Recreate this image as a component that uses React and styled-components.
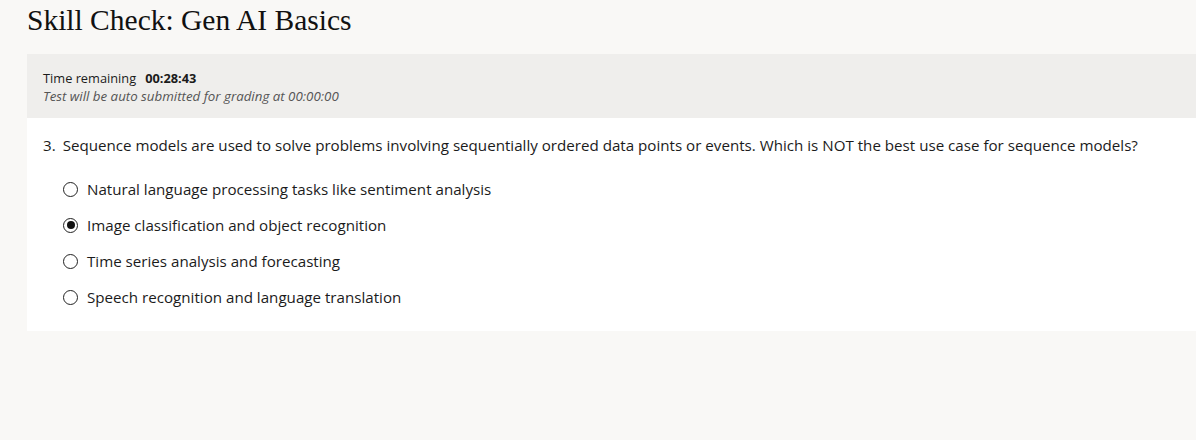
import React from "react";
import styled, { createGlobalStyle } from "styled-components";

const Global = createGlobalStyle`
  html, body { margin: 0; padding: 0; background: #f9f8f6; }
  body { font-family: "Open Sans", "Noto Sans", sans-serif; color: #1b1b1b; }
`;

const Page = styled.div`
  padding: 0 0 0 27px;
  min-height: 440px;
  box-sizing: border-box;
`;

const Title = styled.h1`
  margin: 0;
  padding-top: 4px;
  height: 54px;
  box-sizing: border-box;
  font-family: "Liberation Serif", "Times New Roman", serif;
  font-weight: 400;
  font-size: 29.5px;
  line-height: 32px;
  color: #111;
`;

const Card = styled.section`
  background: #fff;
  display: flex;
  flex-direction: column;
`;

const TimerBar = styled.div`
  background: #efeeec;
  height: 64px;
  padding: 15px 0 0 16px;
  box-sizing: border-box;
  font-size: 12.8px;
  line-height: 18px;
`;

const TimeLine = styled.div`
  display: flex;
  gap: 9px;
`;

const Strong = styled.span`
  font-weight: 700;
`;

const Note = styled.div`
  font-style: italic;
  font-size: 13.3px;
  color: #555;
`;

const Body = styled.div`
  padding: 17px 0 24px 16px;
`;

const Question = styled.p`
  margin: 0 0 24px;
  font-size: 15.15px;
  line-height: 20px;
  display: flex;
  gap: 7px;
`;

const Options = styled.div`
  display: flex;
  flex-direction: column;
  padding-left: 20px;
  gap: 16px;
`;

const Option = styled.label`
  display: flex;
  align-items: center;
  gap: 9px;
  font-size: 15.15px;
  line-height: 20px;
`;

const Radio = styled.span`
  width: 15px;
  height: 15px;
  box-sizing: border-box;
  border-radius: 50%;
  border: 1.5px solid #222;
  display: flex;
  align-items: center;
  justify-content: center;
  &::after {
    content: "";
    width: 8px;
    height: 8px;
    border-radius: 50%;
    background: ${(p) => (p.$checked ? "#111" : "transparent")};
  }
`;

const options = [
  "Natural language processing tasks like sentiment analysis",
  "Image classification and object recognition",
  "Time series analysis and forecasting",
  "Speech recognition and language translation",
];

export default function App() {
  return (
    <>
      <Global />
      <Page>
        <Title>Skill Check: Gen AI Basics</Title>
        <Card>
          <TimerBar>
            <TimeLine>
              <span>Time remaining</span>
              <Strong>00:28:43</Strong>
            </TimeLine>
            <Note>Test will be auto submitted for grading at 00:00:00</Note>
          </TimerBar>
          <Body>
            <Question>
              <span>3.</span>
              <span>
                Sequence models are used to solve problems involving sequentially ordered data points or events. Which is NOT the best use case for sequence models?
              </span>
            </Question>
            <Options>
              {options.map((o, i) => (
                <Option key={o}>
                  <Radio $checked={i === 1} />
                  {o}
                </Option>
              ))}
            </Options>
          </Body>
        </Card>
      </Page>
    </>
  );
}
